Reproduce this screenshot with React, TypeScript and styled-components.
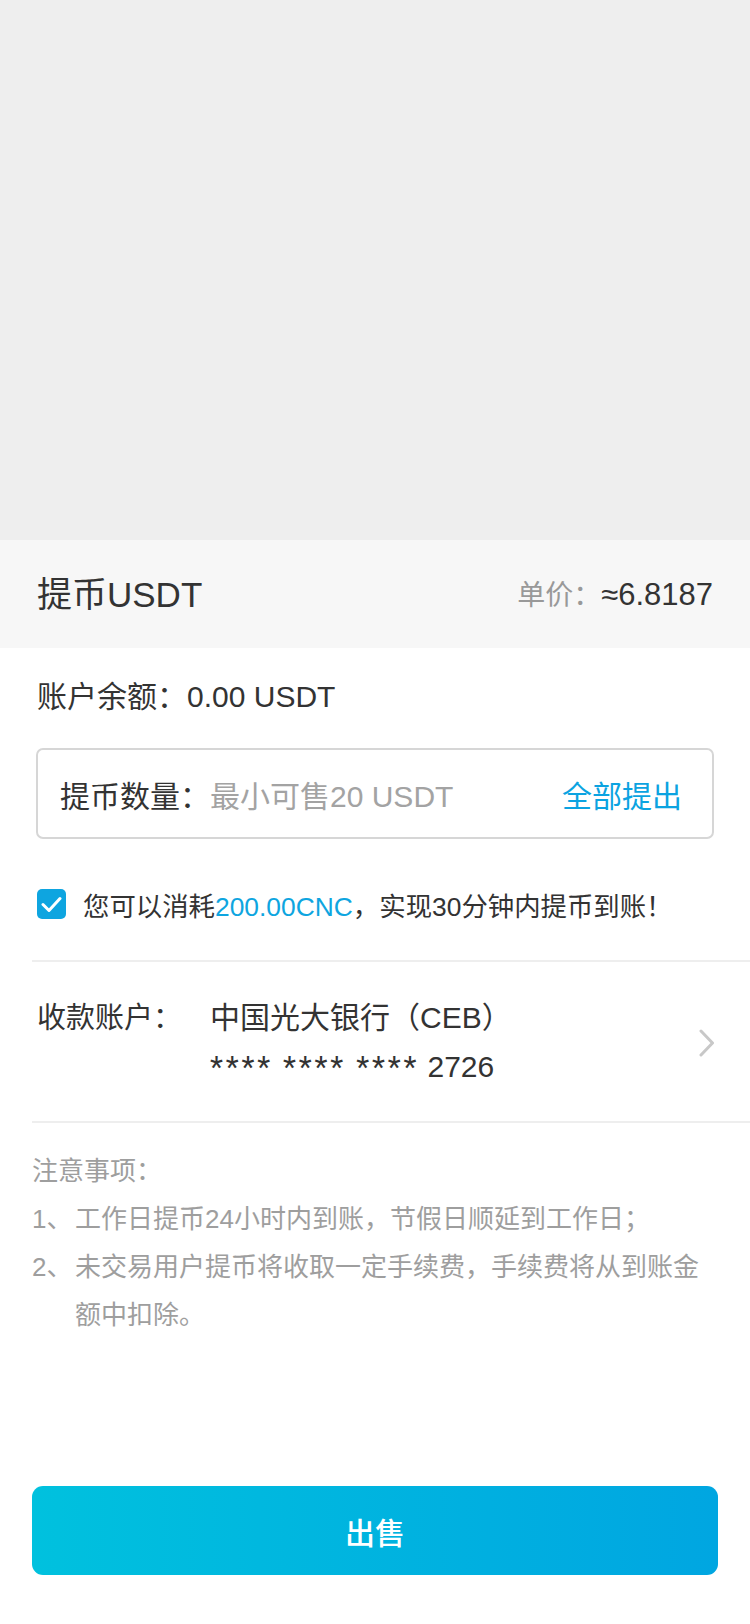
import React from "react";
import styled, { createGlobalStyle } from "styled-components";

const FONT = `"Liberation Sans", "Noto Sans CJK SC", sans-serif`;

const GlobalStyle = createGlobalStyle`
  html, body { margin: 0; padding: 0; background: #ffffff; }
  body { font-family: ${FONT}; color: #333333; }
  * { box-sizing: border-box; }
`;

const Page = styled.div`
  display: flex;
  flex-direction: column;
  width: 750px;
  height: 1624px;
  overflow: hidden;
`;

const Backdrop = styled.div`
  flex: 0 0 540px;
  background: #eeeeee;
`;

const Sheet = styled.div`
  flex: 1;
  display: flex;
  flex-direction: column;
  background: #ffffff;
`;

const Header = styled.div`
  flex: 0 0 108px;
  display: flex;
  align-items: center;
  justify-content: space-between;
  padding: 0 37px;
  background: #f7f7f7;
`;

const Title = styled.div`
  font-size: 35px;
  color: #333333;
  line-height: 1;
`;

const Price = styled.div`
  display: flex;
  align-items: baseline;
  color: #333333;
  line-height: 1;
`;

const PriceLabel = styled.span`
  font-size: 28px;
  color: #999999;
`;

const PriceValue = styled.span`
  font-size: 31px;
`;

const Content = styled.div`
  padding: 0 36px;
  display: flex;
  flex-direction: column;
`;

const Balance = styled.div`
  margin-top: 29px;
  padding-left: 1px;
  font-size: 30px;
  line-height: 40px;
  color: #333333;
`;

const InputBox = styled.div`
  margin-top: 31px;
  height: 91px;
  border: 2px solid #d6d6d6;
  border-radius: 7px;
  display: flex;
  align-items: center;
  padding: 0 30px 0 22px;
  font-size: 30px;
`;

const InputLabel = styled.span`
  color: #333333;
  flex: 0 0 auto;
`;

const Placeholder = styled.span`
  flex: 1;
  color: #a3a3a3;
`;

const Link = styled.span`
  color: #0ba3e1;
`;

const CheckRow = styled.div`
  margin-top: 50px;
  display: flex;
  align-items: center;
  gap: 17px;
  padding-left: 1px;
  font-size: 26.4px;
  color: #333333;
  height: 30px;
`;

const CheckBox = styled.div`
  width: 29px;
  height: 30px;
  border-radius: 5px;
  background: #0ea5e0;
  display: flex;
  align-items: center;
  justify-content: center;
  flex: 0 0 auto;
`;

const Highlight = styled.span`
  color: #0ea5e0;
`;

const Divider = styled.div<{ $top: number }>`
  margin-top: ${(p) => p.$top}px;
  margin-left: 32px;
  height: 2px;
  background: #eeeeee;
`;

const AccountRow = styled.div`
  display: flex;
  align-items: center;
  padding: 32px 35px 30px 37px;
`;

const AccountLabel = styled.div`
  flex: 0 0 173px;
  align-self: flex-start;
  font-size: 29px;
  line-height: 48px;
  color: #333333;
`;

const AccountValue = styled.div`
  flex: 1;
  font-size: 30px;
  color: #333333;
  display: flex;
  flex-direction: column;
`;

const ValueLine = styled.div`
  line-height: 48px;
  height: 48px;
`;

const NumberLine = styled.div`
  line-height: 49px;
  height: 49px;
`;

const Mask = styled.span`
  font-family: Roboto, sans-serif;
  letter-spacing: 2.8px;
`;

const Notes = styled.div`
  margin-top: 24px;
  padding: 0 40px 0 32px;
  font-size: 26px;
  line-height: 48px;
  color: #9e9e9e;
`;

const NoteItem = styled.div`
  display: flex;
`;

const Marker = styled.span`
  flex: 0 0 43px;
`;

const Footer = styled.div`
  margin-top: auto;
  padding: 0 32px 49px 32px;
`;

const SellButton = styled.button`
  width: 100%;
  height: 89px;
  border: none;
  border-radius: 11px;
  background: linear-gradient(90deg, #00c1de 0%, #00a6e1 100%);
  color: #ffffff;
  font-family: ${FONT};
  font-size: 30px;
  font-weight: 500;
  display: flex;
  align-items: center;
  justify-content: center;
  padding: 0;
`;

export default function App() {
  return (
    <>
      <GlobalStyle />
      <Page>
        <Backdrop />
        <Sheet>
          <Header>
            <Title>提币USDT</Title>
            <Price>
              <PriceLabel>单价：</PriceLabel>
              <PriceValue>≈6.8187</PriceValue>
            </Price>
          </Header>
          <Content>
            <Balance>账户余额：0.00 USDT</Balance>
            <InputBox>
              <InputLabel>提币数量：</InputLabel>
              <Placeholder>最小可售20 USDT</Placeholder>
              <Link>全部提出</Link>
            </InputBox>
            <CheckRow>
              <CheckBox>
                <svg width="21" height="17" viewBox="0 0 21 17">
                  <polyline
                    points="2,8.5 8,14.5 19,2.5"
                    fill="none"
                    stroke="#ffffff"
                    strokeWidth="3"
                    strokeLinecap="round"
                    strokeLinejoin="round"
                  />
                </svg>
              </CheckBox>
              <span>
                您可以消耗<Highlight>200.00CNC</Highlight>，实现30分钟内提币到账！
              </span>
            </CheckRow>
          </Content>
          <Divider $top={41} />
          <AccountRow>
            <AccountLabel>收款账户：</AccountLabel>
            <AccountValue>
              <ValueLine>中国光大银行（CEB）</ValueLine>
              <NumberLine>
                <Mask>**** **** ****</Mask> 2726
              </NumberLine>
            </AccountValue>
            <svg width="16" height="28" viewBox="0 0 16 28">
              <polyline
                points="2,2 13.5,14 2,26"
                fill="none"
                stroke="#c8c8c8"
                strokeWidth="3"
                strokeLinecap="round"
                strokeLinejoin="round"
              />
            </svg>
          </AccountRow>
          <Divider $top={0} />
          <Notes>
            <div>注意事项：</div>
            <NoteItem>
              <Marker>1、</Marker>
              <span>工作日提币24小时内到账，节假日顺延到工作日；</span>
            </NoteItem>
            <NoteItem>
              <Marker>2、</Marker>
              <span>未交易用户提币将收取一定手续费，手续费将从到账金额中扣除。</span>
            </NoteItem>
          </Notes>
          <Footer>
            <SellButton>出售</SellButton>
          </Footer>
        </Sheet>
      </Page>
    </>
  );
}
